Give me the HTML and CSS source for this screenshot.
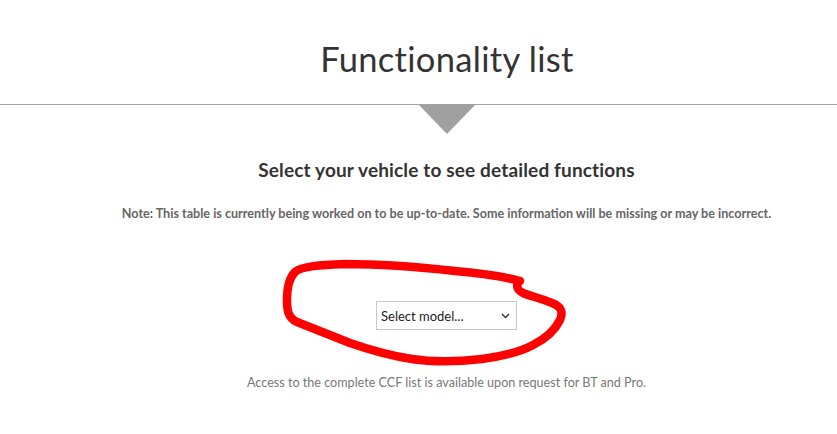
FILE: index.html
```html
<!DOCTYPE html>
<html>
<head>
<meta charset="utf-8">
<link rel="stylesheet" href="styles.css">
</head>
<body>
<div class="page">
  <header class="head">
    <h1 class="title">Functionality list</h1>
  </header>
  <div class="arrow"></div>
  <h2 class="subtitle">Select your vehicle to see detailed functions</h2>
  <p class="note">Note: This table is currently being worked on to be up-to-date. Some information will be missing or may be incorrect.</p>
  <div class="picker">
    <div class="select">
      <span>Select model...</span>
      <svg class="chev" width="9" height="6" viewBox="0 0 9 6"><path d="M1 1 L4.5 4.5 L8 1" fill="none" stroke="#333" stroke-width="1.4"/></svg>
    </div>
  </div>
  <p class="access">Access to the complete CCF list is available upon request for BT and Pro.</p>
  <svg class="scribble" width="837" height="434" viewBox="0 0 837 434">
    <path d="M520 281 C505 277 480 273 455 271 C420 267 380 264 345 264 C320 265 302 266 295 272 C288 279 287 290 287 300 C287 310 288 318 297 322 C312 328 330 335 350 343 C370 350 392 356 412 359 C432 362 455 362 482 359 C505 356 520 352 533 345 C547 338 555 330 560 320 C564 311 560 306 552 303 C540 298 530 296 523 293 C517 290 515 285 520 281" fill="none" stroke="#ff0000" stroke-width="8.5" stroke-linecap="round" stroke-linejoin="round"/>
  </svg>
</div>
</body>
</html>
```
FILE: styles.css
```css
html, body {
  margin: 0;
  padding: 0;
  background: #fff;
}
.page {
  position: relative;
  width: 837px;
  height: 434px;
  overflow: hidden;
  font-family: Lato, "Noto Sans", sans-serif;
  color: #333;
}
.head {
  border-bottom: 1px solid #a0a0a0;
  height: 104px;
  display: flex;
  justify-content: center;
}
.title {
  margin: 0;
  padding-left: 57px;
  padding-top: 39px;
  font-size: 34.5px;
  line-height: 40px;
  font-weight: 400;
  color: #333;
  letter-spacing: 0.3px;
}
.arrow {
  width: 0;
  height: 0;
  margin: 0 auto 0 419px;
  border-left: 28px solid transparent;
  border-right: 28px solid transparent;
  border-top: 29px solid #a0a0a0;
}
.subtitle {
  margin: 24px 0 0 56px;
  text-align: center;
  font-size: 19px;
  line-height: 24px;
  font-weight: 700;
  color: #333;
  letter-spacing: 0.15px;
}
.note {
  margin: 24px 0 0 56px;
  text-align: center;
  font-size: 12.6px;
  line-height: 16px;
  font-weight: 700;
  color: #666;
}
.picker {
  display: flex;
  justify-content: flex-start;
  padding-left: 376px;
  margin-top: 79px;
}
.select {
  box-sizing: border-box;
  width: 141px;
  height: 29px;
  border: 1px solid #c8c8c8;
  display: flex;
  align-items: center;
  justify-content: space-between;
  padding: 0 6px 0 4px;
  font-size: 13px;
  color: #222;
}
.chev {
  display: block;
}
.access {
  margin: 45px 0 0 56px;
  text-align: center;
  font-size: 12.6px;
  line-height: 16px;
  color: #777;
}
.scribble {
  position: absolute;
  left: 0;
  top: 0;
  pointer-events: none;
}
```
